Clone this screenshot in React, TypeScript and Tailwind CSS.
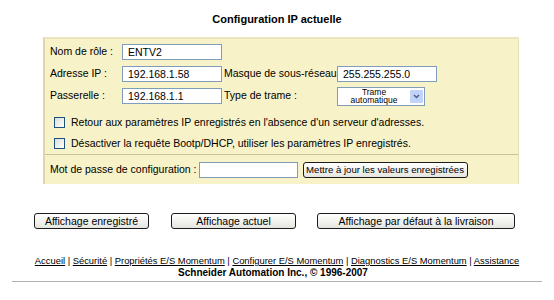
import React from 'react';

const font = { fontFamily: '"Liberation Sans", Arial, sans-serif' };

const Field: React.FC<{ value: string; w?: string }> = ({ value, w = 'w-[100px]' }) => (
  <div className={`${w} h-[16px] bg-white border border-[#7f9db9] px-[5px] text-[10.5px] leading-[14px] text-black whitespace-nowrap`}>
    {value}
  </div>
);

const XpButton: React.FC<{ label: string; w: string; size?: string }> = ({ label, w, size = 'text-[10.5px]' }) => (
  <button
    className={`${w} h-[16px] rounded-[3px] border border-[#1c1c1c] bg-gradient-to-b from-white to-[#e6e6e0] ${size} leading-[14px] text-black text-center whitespace-nowrap overflow-hidden`}
  >
    {label}
  </button>
);

const Check: React.FC<{ label: string }> = ({ label }) => (
  <div className="flex items-center h-[21px]">
    <div className="w-[11px] h-[11px] ml-[9px] mr-[6px] border border-[#1c5180] bg-gradient-to-br from-[#dcdcd7] to-white" />
    <span className="text-[10.5px] whitespace-nowrap">{label}</span>
  </div>
);

export default function App() {
  const links = [
    'Accueil',
    'Sécurité',
    'Propriétés E/S Momentum',
    'Configurer E/S Momentum',
    'Diagnostics E/S Momentum',
    'Assistance',
  ];

  return (
    <div className="w-[554px] h-[300px] bg-white text-black" style={font}>
      {/* Title */}
      <div className="pt-[11px] h-[37px] text-center text-[11px] font-bold">Configuration IP actuelle</div>

      {/* Panel */}
      <div className="ml-[43px] w-[476px] h-[147px] bg-[#f8f2c8] border-l-2 border-t-2 border-r border-l-[#ddd6aa] border-t-[#ece5bb] border-r-[#e6dfb5]">
        <div className="pl-[5px] pt-[2px]">
          <div className="flex items-center h-[22px]">
            <span className="w-[72px] text-[10.5px] whitespace-nowrap">Nom de rôle :</span>
            <Field value="ENTV2" />
          </div>
          <div className="flex items-center h-[22px]">
            <span className="w-[72px] text-[10.5px] whitespace-nowrap">Adresse IP :</span>
            <Field value="192.168.1.58" />
            <span className="w-[115px] pl-[2px] text-[10.5px] whitespace-nowrap">Masque de sous-réseau :</span>
            <Field value="255.255.255.0" />
          </div>
          <div className="flex items-center h-[22px]">
            <span className="w-[72px] text-[10.5px] whitespace-nowrap">Passerelle :</span>
            <Field value="192.168.1.1" />
            <span className="w-[115px] pl-[2px] text-[10.5px] whitespace-nowrap">Type de trame :</span>
            <div className="w-[88px] h-[19px] bg-white border border-[#7f9db9] flex items-center">
              <div className="flex-1 text-center text-[8.5px] leading-[8.5px]">
                <div>Trame</div>
                <div>automatique</div>
              </div>
              <div className="w-[13px] h-[13px] mr-[1px] bg-[#c1d3fb] rounded-[1px] flex items-center justify-center">
                <svg width="7" height="5" viewBox="0 0 7 5">
                  <path d="M1 1 L3.5 3.5 L6 1" stroke="#4d6185" strokeWidth="1.5" fill="none" />
                </svg>
              </div>
            </div>
          </div>
        </div>
        <div className="pt-[5px]">
          <Check label="Retour aux paramètres IP enregistrés en l'absence d'un serveur d'adresses." />
          <Check label="Désactiver la requête Bootp/DHCP, utiliser les paramètres IP enregistrés." />
        </div>
        <div className="border-t border-[#c9c2a0] pl-[5px] pt-[7px] flex items-center">
          <span className="text-[10.5px] whitespace-nowrap">Mot de passe de configuration :</span>
          <div className="w-[99px] h-[16px] bg-white border border-[#7f9db9] ml-[2px]" />
          <XpButton label="Mettre à jour les valeurs enregistrées" w="w-[165px] ml-[5px]" size="text-[9.6px]" />
        </div>
      </div>

      {/* Buttons */}
      <div className="flex items-center h-[16px] mt-[29px]">
        <XpButton label="Affichage enregistré" w="w-[115px] ml-[34px]" />
        <XpButton label="Affichage actuel" w="w-[125px] ml-[22px]" />
        <XpButton label="Affichage par défaut à la livraison" w="w-[198px] ml-[21px]" />
      </div>

      {/* Footer */}
      <div className="mt-[26px] text-center text-[9.4px] leading-[12px] whitespace-nowrap">
        {links.map((l, i) => (
          <React.Fragment key={l}>
            <a className="underline">{l}</a>
            {i < links.length - 1 && ' | '}
          </React.Fragment>
        ))}
      </div>
      <div className="text-center text-[10px] leading-[12px] font-bold pr-[8px]">
        Schneider Automation Inc., © 1996-2007
      </div>
      <div className="mx-[12px] mt-[2px] border-t border-[#b0b0b0]" />
    </div>
  );
}
